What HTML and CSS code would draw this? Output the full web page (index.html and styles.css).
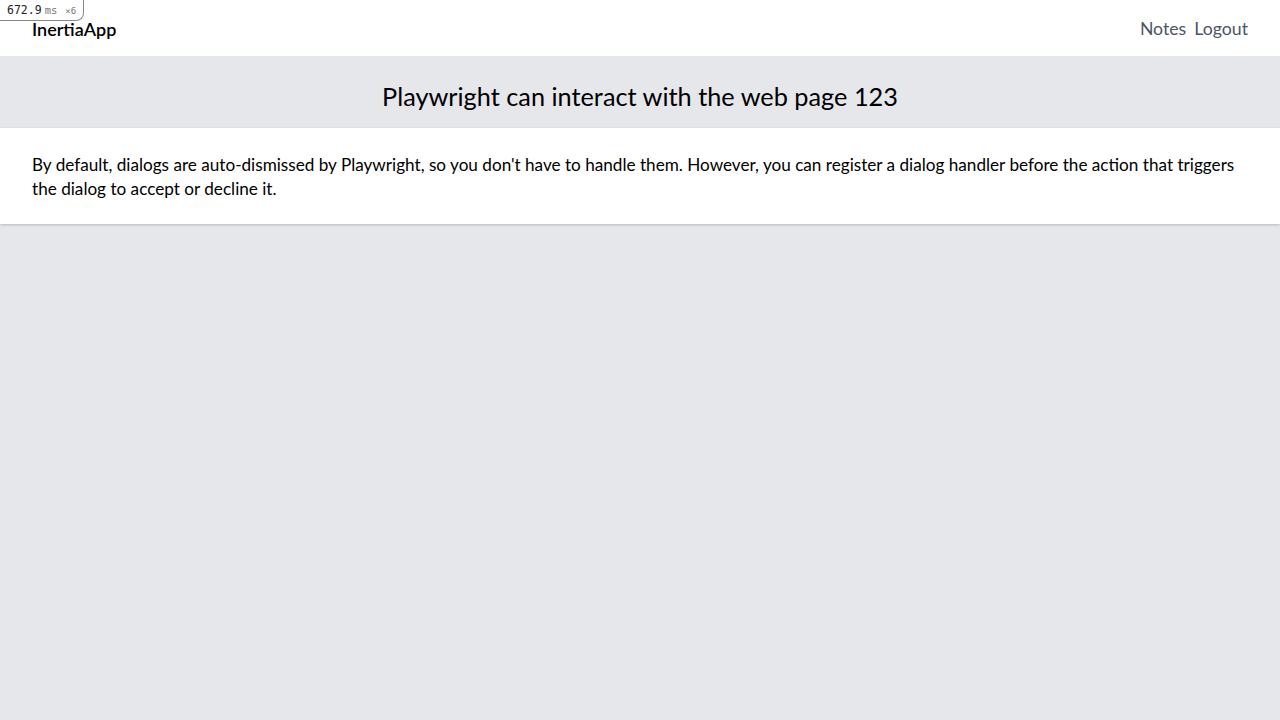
FILE: index.html
```html
<!DOCTYPE html>
<html lang="en">
<head>
<meta charset="utf-8">
<title>InertiaApp</title>
<link rel="stylesheet" href="styles.css">
</head>
<body>
<div class="perf-badge"><span class="perf-ms">672.9</span><span class="perf-unit">ms</span><span class="perf-count">×6</span></div>
<header class="topbar">
  <a class="brand" href="#">InertiaApp</a>
  <nav class="nav">
    <a class="nav-link" href="#">Notes</a>
    <a class="nav-link" href="#">Logout</a>
  </nav>
</header>
<main class="main">
  <h1 class="page-title">Playwright can interact with the web page 123</h1>
  <section class="card">
    <p class="card-text">By default, dialogs are auto-dismissed by Playwright, so you don't have to handle them. However, you can register a dialog handler before the action that triggers the dialog to accept or decline it.</p>
  </section>
</main>
</body>
</html>
```

FILE: styles.css
```css
* { box-sizing: border-box; }
html, body { margin: 0; padding: 0; }
body {
  font-family: Lato, "Noto Sans", sans-serif;
  background: #e5e7eb;
  color: #000;
  min-height: 720px;
}
a { text-decoration: none; }

.perf-badge {
  position: absolute;
  top: 0;
  left: 0;
  height: 21px;
  padding: 2px 7px 0 7px;
  background: #fff;
  border: 1px solid #888;
  border-top: none;
  border-left: none;
  border-bottom-right-radius: 8px;
  font-family: "DejaVu Sans Mono", monospace;
  font-size: 11.5px;
  line-height: 16px;
  color: #222;
  display: flex;
  align-items: baseline;
  gap: 3px;
  z-index: 10;
}
.perf-unit { color: #777; font-size: 10.5px; }
.perf-count { color: #777; font-size: 9px; margin-left: 5px; }

.topbar {
  height: 56px;
  background: #fff;
  display: flex;
  align-items: center;
  justify-content: space-between;
  padding: 1px 32px 0;
}
.brand {
  color: #000;
  font-size: 18px;
  font-weight: 600;
  line-height: 24px;
}
.nav { display: flex; gap: 8px; }
.nav-link {
  color: #4b5563;
  font-size: 17.7px;
  line-height: 24px;
}

.page-title {
  margin: 0;
  padding: 24px 0 16px;
  text-align: center;
  font-size: 25.3px;
  font-weight: 400;
  line-height: 32px;
}

.card {
  background: #fff;
  padding: 25px 32px 23px;
  box-shadow: 0 1px 3px rgba(0,0,0,0.12), 0 1px 2px rgba(0,0,0,0.08);
}
.card-text {
  margin: 0;
  font-size: 17.15px;
  line-height: 24px;
}
```
